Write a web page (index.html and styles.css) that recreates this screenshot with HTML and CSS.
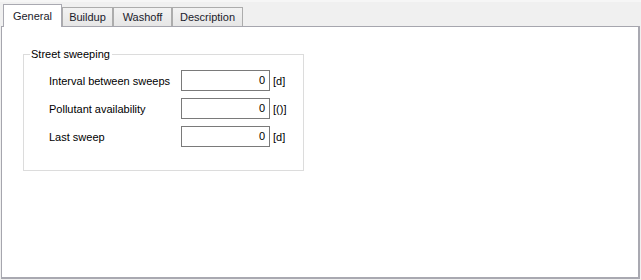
FILE: index.html
```html
<!DOCTYPE html>
<html>
<head>
<meta charset="utf-8">
<link rel="stylesheet" href="styles.css">
</head>
<body>
<div class="window">
  <div class="tabs">
    <div class="tab active t-general">General</div>
    <div class="tab t-buildup">Buildup</div>
    <div class="tab t-washoff">Washoff</div>
    <div class="tab t-desc">Description</div>
  </div>
  <div class="panel">
    <fieldset class="group">
      <legend class="group-title">Street sweeping</legend>
      <div class="form">
        <div class="label">Interval between sweeps</div>
        <div class="field">0</div>
        <div class="unit">[d]</div>
        <div class="label">Pollutant availability</div>
        <div class="field">0</div>
        <div class="unit">[()]</div>
        <div class="label">Last sweep</div>
        <div class="field">0</div>
        <div class="unit">[d]</div>
      </div>
    </fieldset>
  </div>
</div>
</body>
</html>
```
FILE: styles.css
```css
html, body {
  margin: 0;
  padding: 0;
  background: #f0f0f0;
}
body {
  font-family: "Liberation Sans", Arial, sans-serif;
  font-size: 11px;
  color: #000;
  width: 641px;
  height: 280px;
  overflow: hidden;
}
.window {
  display: flex;
  flex-direction: column;
  height: 280px;
  border-top: 2px solid #f6f6f6;
  box-sizing: border-box;
}
.tabs {
  display: flex;
  align-items: flex-end;
  padding: 2px 0 0 3px;
  height: 24px;
  box-sizing: border-box;
  position: relative;
  z-index: 1;
}
.tab {
  box-sizing: border-box;
  height: 19px;
  border: 1px solid #acacac;
  border-bottom: none;
  background: linear-gradient(#f2f2f2, #e6e6e6);
  text-align: center;
  line-height: 18px;
  color: #1b1b2b;
}
.tab.active {
  height: 23px;
  margin-bottom: -1px;
  background: #fff;
  line-height: 22px;
  padding-bottom: 2px;
  border-color: #a9a9b1;
}
.t-general { width: 59px; }
.t-buildup { width: 51px; }
.t-washoff { width: 59px; }
.t-desc { width: 71px; }
.panel {
  margin-left: 1px;
  width: 639px;
  height: 253px;
  box-sizing: border-box;
  background: #fff;
  border: 1px solid #a6a6ae;
  border-right-width: 2px;
  border-bottom-width: 2px;
  border-right-color: #a9a9b1;
  border-bottom-color: #a9a9b1;
}
.group {
  margin: 20px 0 0 21px;
  width: 281px;
  height: 124px;
  box-sizing: border-box;
  border: 1px solid #dcdcdc;
  padding: 9px 0 0 6px;
  min-width: 0;
}
.group-title {
  margin-left: 0;
  padding: 0 2px 0 1px;
  line-height: 14px;
}
.form {
  display: grid;
  grid-template-columns: 132px 89px auto;
  grid-auto-rows: 21px;
  row-gap: 7px;
  align-items: center;
  margin-left: 19px;
}
.field {
  box-sizing: border-box;
  height: 21px;
  border: 1px solid #7a7a7a;
  text-align: right;
  padding-right: 4px;
  line-height: 19px;
  background: #fff;
}
.unit {
  padding-left: 3px;
}
```
